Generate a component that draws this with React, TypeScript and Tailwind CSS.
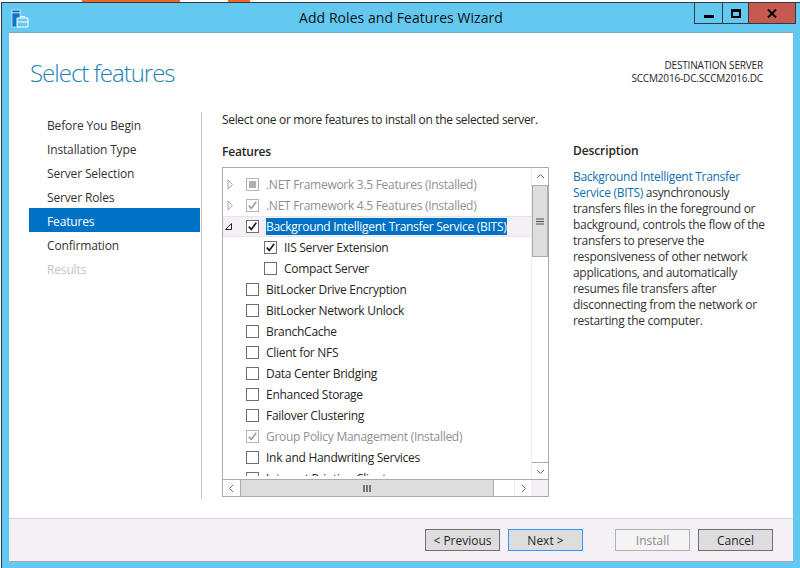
import React from 'react'

const steps = [
  { label: 'Before You Begin' },
  { label: 'Installation Type' },
  { label: 'Server Selection' },
  { label: 'Server Roles' },
  { label: 'Features', active: true },
  { label: 'Confirmation' },
  { label: 'Results', disabled: true },
]

type Feature = {
  label: string
  state?: 'none' | 'checked' | 'mixed'
  installed?: boolean
  indent?: boolean
  expander?: 'closed' | 'open'
  selected?: boolean
}

const features: Feature[] = [
  { label: '.NET Framework 3.5 Features (Installed)', state: 'mixed', installed: true, expander: 'closed' },
  { label: '.NET Framework 4.5 Features (Installed)', state: 'checked', installed: true, expander: 'closed' },
  { label: 'Background Intelligent Transfer Service (BITS)', state: 'checked', expander: 'open', selected: true },
  { label: 'IIS Server Extension', state: 'checked', indent: true },
  { label: 'Compact Server', indent: true },
  { label: 'BitLocker Drive Encryption' },
  { label: 'BitLocker Network Unlock' },
  { label: 'BranchCache' },
  { label: 'Client for NFS' },
  { label: 'Data Center Bridging' },
  { label: 'Enhanced Storage' },
  { label: 'Failover Clustering' },
  { label: 'Group Policy Management (Installed)', state: 'checked', installed: true },
  { label: 'Ink and Handwriting Services' },
  { label: 'Internet Printing Client' },
]

const description = [
  'transfers files in the foreground or',
  'background, controls the flow of the',
  'transfers to preserve the',
  'responsiveness of other network',
  'applications, and automatically',
  'resumes file transfers after',
  'disconnecting from the network or',
  'restarting the computer.',
]

const Checkbox = ({ state = 'none', installed }: { state?: Feature['state']; installed?: boolean }) => (
  <span
    className={`flex h-[13px] w-[13px] shrink-0 items-center justify-center border bg-white ${
      installed ? 'border-[#b4b4b4]' : 'border-[#6e6e6e]'
    }`}
  >
    {state === 'mixed' && <span className="h-[7px] w-[7px] bg-[#b0b0b0]" />}
    {state === 'checked' && (
      <svg width="11" height="11" viewBox="0 0 11 11" fill="none">
        <path
          d="M1.8 5.6 L4.3 8.4 L9.2 1.8"
          stroke={installed ? '#a0a0a0' : '#1a1a1a'}
          strokeWidth="1.7"
        />
      </svg>
    )}
  </span>
)

const Expander = ({ kind }: { kind?: Feature['expander'] }) => (
  <span className="flex h-[21px] w-[23px] shrink-0 items-center pl-[4px]">
    {kind === 'closed' && (
      <svg width="7" height="11" viewBox="0 0 7 11" fill="none">
        <path d="M1 1 L5.5 5.5 L1 10 Z" stroke="#a6a6a6" />
      </svg>
    )}
    {kind === 'open' && (
      <svg className="-ml-[2px]" width="7" height="7" viewBox="0 0 7 7">
        <path d="M6.5 0.5 V6.5 H0.5 Z" fill="#fff" stroke="#262626" />
      </svg>
    )}
  </span>
)

const Row = ({ f }: { f: Feature }) => (
  <div
    className={`flex h-[21px] shrink-0 items-center ${f.indent ? 'pl-[41px]' : ''} ${
      f.selected ? 'bg-[#f5f0f5] shadow-[inset_0_1px_0_#e6e6e6,inset_0_-1px_0_#e6e6e6]' : ''
    }`}
  >
    {!f.indent && <Expander kind={f.expander} />}
    <Checkbox state={f.state} installed={f.installed} />
    <span
      className={`ml-[7px] whitespace-nowrap text-[12px] leading-[17px] tracking-[-0.28px] ${
        f.selected ? 'bg-[#0072c6] text-white' : f.installed ? 'text-[#8f8f8f]' : 'text-[#262626]'
      }`}
    >
      {f.label}
    </span>
  </div>
)

const Arrow = ({ d }: { d: string }) => (
  <svg width="9" height="9" viewBox="0 0 9 9" fill="none">
    <path d={d} stroke="#6a6a6a" strokeWidth="1" />
  </svg>
)

const Grip = ({ vertical }: { vertical?: boolean }) => (
  <svg width="8" height="7" viewBox="0 0 8 7">
    {vertical ? (
      <path d="M0 1 H8 M0 3.5 H8 M0 6 H8" stroke="#4a4a4a" strokeWidth="1" />
    ) : (
      <path d="M1 0 V7 M4 0 V7 M7 0 V7" stroke="#4a4a4a" strokeWidth="1.4" />
    )}
  </svg>
)

const WizardButton = ({ label, variant }: { label: string; variant?: 'focus' | 'disabled' }) => (
  <button
    type="button"
    className={`block h-[22px] w-[75px] border pt-px text-[12px] leading-none ${
      variant === 'focus'
        ? 'border-[#3399ff] bg-[#dddddd] text-[#262626]'
        : variant === 'disabled'
          ? 'border-[#adb2b5] bg-[#f4f4f4] text-[#8a8a8a]'
          : 'border-[#707070] bg-[#dddddd] text-[#262626]'
    }`}
  >
    {label}
  </button>
)

export default function App() {
  return (
    <div className="flex h-[568px] w-[800px] flex-col overflow-hidden bg-white font-['Open_Sans','Liberation_Sans',sans-serif]">
      {/* bits of the desktop behind the window */}
      <div className="flex h-[2px] shrink-0">
        <div className="w-[82px]" />
        <div className="w-[98px] bg-[#f26522]" />
        <div className="w-[48px]" />
        <div className="w-[22px] bg-[#f26522]" />
      </div>

      <div className="relative ml-px flex min-h-0 flex-1 flex-col border-l border-t border-[#2b3a44] bg-[#63c9f0]">
        {/* title bar */}
        <div className="relative flex h-[29px] shrink-0 items-center justify-center pb-px">
          <svg className="absolute left-[9px] top-[6px]" width="18" height="19" viewBox="0 0 18 19">
            <rect x="1" y="1" width="8" height="3" fill="#0b76c4" stroke="#fff" strokeWidth="0.6" />
            <rect x="1" y="4" width="8" height="14" fill="#0b76c4" stroke="#fff" strokeWidth="0.6" />
            <path d="M6 9 H17 V18 H6 Z" fill="#63c9f0" stroke="#fff" strokeWidth="1" />
            <path d="M9.5 9 V7.5 H13.5 V9 M6 13 H17" fill="none" stroke="#fff" strokeWidth="1" />
          </svg>
          <span className="text-[14px] tracking-[0.05px] text-[#101010]">Add Roles and Features Wizard</span>
        </div>

        {/* caption buttons */}
        <div className="absolute left-[692px] top-0 flex h-[21px] border border-t-0 border-[#2b3a44]">
          <div className="flex w-[28px] items-end justify-center border-r border-[#2b3a44] pb-[5px]">
            <span className="h-[3px] w-[10px] bg-black" />
          </div>
          <div className="flex w-[26px] items-center justify-center border-r border-[#2b3a44]">
            <span className="h-[9px] w-[10px] border-2 border-t-[3px] border-black" />
          </div>
          <div className="flex w-[46px] items-center justify-center bg-[#c75a50]">
            <svg width="10" height="9" viewBox="0 0 10 9">
              <path d="M1 0.5 L9 8.5 M9 0.5 L1 8.5" stroke="#000" strokeWidth="2" />
            </svg>
          </div>
        </div>

        {/* client area */}
        <div className="ml-[7px] mr-[7px] flex h-[530px] flex-col border-t border-[#7fa6c4] bg-white">
          <div className="flex h-[79px] shrink-0 justify-between pl-[21px] pr-[30px]">
            <h1 className="pt-[22px] text-[24px] font-light leading-[36px] tracking-[-1px] text-[#1a82b4]">
              Select features
            </h1>
            <div className="pt-[26px] text-right text-[10px] leading-[13px] tracking-[-0.17px] text-[#262626]">
              <div>DESTINATION SERVER</div>
              <div>SCCM2016-DC.SCCM2016.DC</div>
            </div>
          </div>

          <div className="flex h-[387px] shrink-0">
            {/* steps */}
            <nav className="w-[193px] shrink-0 border-r border-[#c8c8c8] pl-[20px]">
              <div className="w-[171px]">
                {steps.map((s) => (
                  <div
                    key={s.label}
                    className={`flex h-[24px] items-center pl-[18px] pt-[4px] text-[12px] tracking-[-0.15px] ${
                      s.active ? 'bg-[#0072c6] text-white' : s.disabled ? 'text-[#c4c4c4]' : 'text-[#333333]'
                    }`}
                  >
                    {s.label}
                  </div>
                ))}
              </div>
            </nav>

            {/* main column */}
            <main className="flex min-w-0 flex-1 pl-[20px] pt-px">
              <div className="w-[327px] shrink-0">
                <p className="h-[31px] whitespace-nowrap text-[12px] leading-[14px] tracking-[-0.33px] text-[#262626]">
                  Select one or more features to install on the selected server.
                </p>
                <h2 className="h-[23px] text-[12px] font-semibold leading-[15px] tracking-[-0.2px] text-[#262626]">
                  Features
                </h2>

                {/* feature tree */}
                <div className="flex h-[330px] w-[327px] flex-col border border-[#ababab]">
                  <div className="flex min-h-0 flex-1">
                    <div className="flex min-w-0 flex-1 flex-col pb-[3px] pt-[6px]">
                      <div className="flex min-h-0 flex-1 flex-col overflow-hidden">
                        {features.map((f) => (
                          <Row key={f.label} f={f} />
                        ))}
                      </div>
                    </div>
                    <div className="flex w-[17px] shrink-0 flex-col border-l border-[#ededed]">
                      <div className="flex h-[17px] items-center justify-center">
                        <Arrow d="M1 6 L4.5 2.5 L8 6" />
                      </div>
                      <div className="flex h-[72px] items-center justify-center border border-[#ababab] bg-[#dddddd]">
                        <Grip vertical />
                      </div>
                      <div className="flex-1" />
                      <div className="flex h-[17px] items-center justify-center border-t border-[#ababab]">
                        <Arrow d="M1 3 L4.5 6.5 L8 3" />
                      </div>
                    </div>
                  </div>
                  <div className="flex h-[17px] shrink-0 border-t border-[#ababab]">
                    <div className="flex w-[17px] items-center justify-center">
                      <Arrow d="M6 1 L2.5 4.5 L6 8" />
                    </div>
                    <div className="flex w-[254px] items-center justify-center border-x border-[#ababab] bg-[#dddddd]">
                      <Grip />
                    </div>
                    <div className="w-[20px]" />
                    <div className="flex w-[17px] items-center justify-center border-l border-[#ededed]">
                      <Arrow d="M3 1 L6.5 4.5 L3 8" />
                    </div>
                    <div className="flex-1 bg-[#f5f0f5]" />
                  </div>
                </div>
              </div>

              {/* description */}
              <aside className="ml-[24px] w-[205px] whitespace-nowrap pt-[30px] text-[12px] leading-[16px] tracking-[-0.3px] text-[#333333]">
                <h2 className="h-[26px] font-semibold tracking-[-0.1px] text-[#262626]">Description</h2>
                <div>
                  <span className="text-[#0f6fb0]">Background Intelligent Transfer</span>
                  <br />
                  <span className="text-[#0f6fb0]">Service (BITS)</span> asynchronously
                  {description.map((line) => (
                    <div key={line}>{line}</div>
                  ))}
                </div>
              </aside>
            </main>
          </div>

          {/* footer */}
          <footer className="mt-[19px] flex h-[44px] shrink-0 items-center justify-end gap-[8px] border-y border-t-[#d8d8d8] border-b-[#a8a8a8] bg-[#f5f0f5] pr-[20px]">
            <WizardButton label="< Previous" />
            <WizardButton label="Next >" variant="focus" />
            <div className="ml-[24px]">
              <WizardButton label="Install" variant="disabled" />
            </div>
            <WizardButton label="Cancel" />
          </footer>
        </div>
      </div>
    </div>
  )
}
